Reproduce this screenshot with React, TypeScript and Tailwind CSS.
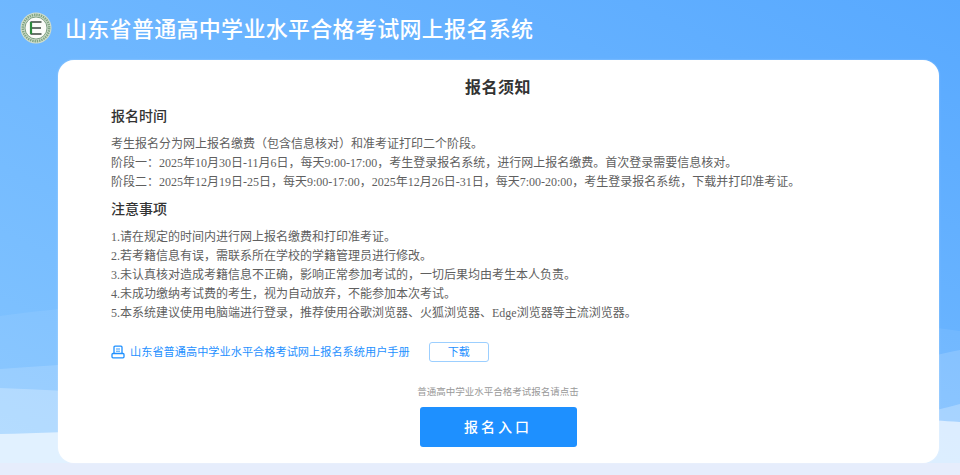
const bodyFont = 'font-["Liberation_Serif","Noto_Sans_CJK_SC",serif]';

const timeLines = [
  '考生报名分为网上报名缴费（包含信息核对）和准考证打印二个阶段。',
  '阶段一：2025年10月30日-11月6日，每天9:00-17:00，考生登录报名系统，进行网上报名缴费。首次登录需要信息核对。',
  '阶段二：2025年12月19日-25日，每天9:00-17:00，2025年12月26日-31日，每天7:00-20:00，考生登录报名系统，下载并打印准考证。',
];

const noticeLines = [
  '1.请在规定的时间内进行网上报名缴费和打印准考证。',
  '2.若考籍信息有误，需联系所在学校的学籍管理员进行修改。',
  '3.未认真核对造成考籍信息不正确，影响正常参加考试的，一切后果均由考生本人负责。',
  '4.未成功缴纳考试费的考生，视为自动放弃，不能参加本次考试。',
  '5.本系统建议使用电脑端进行登录，推荐使用谷歌浏览器、火狐浏览器、Edge浏览器等主流浏览器。',
];

function Logo() {
  return (
    <svg width="32" height="32" viewBox="0 0 32 32" className="shrink-0">
      <circle cx="16" cy="16" r="15.5" fill="#cfdccb" />
      <circle cx="16" cy="16" r="13.2" fill="none" stroke="#7fa582" strokeWidth="2.4" strokeDasharray="1.4 0.9" />
      <circle cx="16" cy="16" r="11" fill="#fbfcf9" stroke="#4f7d56" strokeWidth="0.7" />
      <path d="M10.5 10h11M12 16h9M10.5 22h11" stroke="#3a453c" strokeWidth="1.4" />
      <path d="M11 10v12" stroke="#2c8a3c" strokeWidth="2.2" />
    </svg>
  );
}

// Vagues du bas, voiles blancs superposés sur le dégradé
function Background() {
  return (
    <svg className="absolute inset-0" width="960" height="475" viewBox="0 0 960 475">
      <path d="M0 316 C120 300 300 290 500 300 S840 315 960 331V475H0Z" fill="#fff" fillOpacity="0.07" />
      <path d="M0 369 C200 355 500 345 700 365 S880 365 960 350V475H0Z" fill="#fff" fillOpacity="0.15" />
      <path d="M0 388 C200 395 450 430 650 430 S880 425 960 404V475H0Z" fill="#fff" fillOpacity="0.25" />
      <path d="M0 434 C200 428 500 410 700 412 S880 417 960 422V475H0Z" fill="#fff" fillOpacity="0.6" />
      <rect x="0" y="463" width="960" height="12" fill="#e6edfc" />
    </svg>
  );
}

function ManualIcon() {
  return (
    <svg width="14" height="14" viewBox="0 0 14 14" fill="none" stroke="#1e90ff" strokeWidth="1.3" className="shrink-0">
      <path d="M3 8.5V2.2c0-.6.4-1 1-1h6c.6 0 1 .4 1 1v6.3" />
      <path d="M5 4h4M5 6.2h4" strokeWidth="0.9" />
      <path d="M1 9.5c0-.6.4-1 1-1h10c.6 0 1 .4 1 1v2.3c0 .6-.4 1-1 1H2c-.6 0-1-.4-1-1z" />
    </svg>
  );
}

export default function App() {
  return (
    <div className={`relative h-[475px] w-[960px] overflow-hidden bg-gradient-to-tr from-[#84c5ff] to-[#58a9ff] ${bodyFont}`}>
      <Background />

      <div className="relative flex h-[60px] items-center gap-[13px] pb-[5px] pl-5">
        <Logo />
        <h1 className="font-['Noto_Sans_CJK_SC',sans-serif] text-[22px] font-medium tracking-[0.3px] text-white">
          山东省普通高中学业水平合格考试网上报名系统
        </h1>
      </div>

      <main className="relative ml-[58px] h-[403px] w-[881px] rounded-[16px] bg-white pl-[53px] pr-[54px] pt-[14px] text-[12px] text-[#5f5f5f] shadow-[0_0_2px_rgba(255,255,255,0.4)]">
        <h2 className="text-center font-['Noto_Sans_CJK_SC',sans-serif] text-[16px] font-bold leading-6 tracking-[0.5px] text-[#333]">
          报名须知
        </h2>

        <h3 className="mt-[7px] font-['Noto_Sans_CJK_SC',sans-serif] text-[14px] font-medium leading-5 text-[#333]">报名时间</h3>
        <div className="mt-[10px] leading-[19px]">
          {timeLines.map((line) => (
            <p key={line}>{line}</p>
          ))}
        </div>

        <h3 className="mt-[6px] font-['Noto_Sans_CJK_SC',sans-serif] text-[14px] font-medium leading-5 text-[#333]">注意事项</h3>
        <div className="mt-[10px] leading-[19px]">
          {noticeLines.map((line) => (
            <p key={line}>{line}</p>
          ))}
        </div>

        <div className="mt-[19px] flex h-5 items-center">
          <ManualIcon />
          <span className="ml-[5px] text-[11.2px] text-[#1e90ff]">山东省普通高中学业水平合格考试网上报名系统用户手册</span>
          <button className="ml-[19px] h-5 w-[60px] rounded-[3px] border border-[#9ccfff] bg-white text-[11px] text-[#1e90ff]">下载</button>
        </div>

        <div className="mt-[22px] flex flex-col items-center">
          <p className="text-[9.5px] leading-4 text-[#999]">普通高中学业水平合格考试报名请点击</p>
          <button className="mt-[7px] h-10 w-[157px] rounded-[3px] bg-[#1e90ff] text-[14px] font-medium tracking-[3px] text-white">
            报名入口
          </button>
        </div>
      </main>
    </div>
  );
}
